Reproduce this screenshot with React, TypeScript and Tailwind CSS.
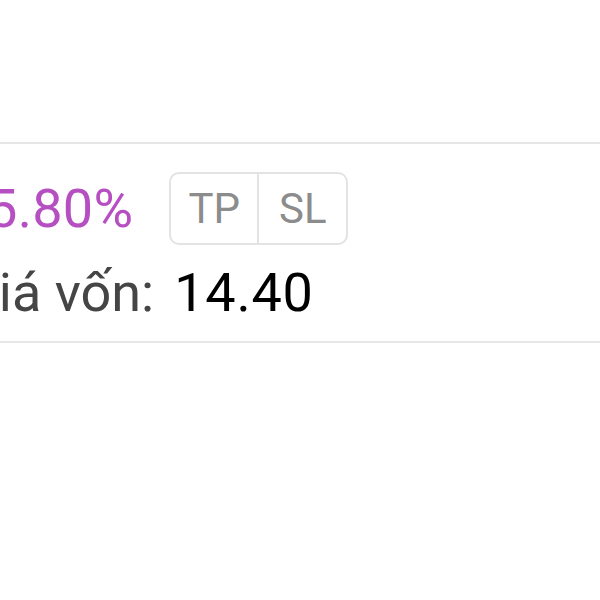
import React from "react";

export default function App() {
  return (
    <div
      className="w-[600px] h-[600px] bg-white overflow-hidden pt-[142px]"
      style={{ fontFamily: "Roboto, 'Noto Sans', sans-serif" }}
    >
      <div className="border-y-2 border-[#e6e6e6] h-[201px] flex flex-col pt-[28px]">
        <div className="flex items-center h-[73px]">
          <span className="ml-[-13px] text-[54px] leading-none tracking-[0.3px] text-[#b64fc1] whitespace-nowrap">
            5.80%
          </span>
          <div className="ml-[36px] flex h-[73px] w-[179px] rounded-[10px] border-2 border-[#e3e3e3]">
            <div className="w-[88px] flex items-center justify-center border-r-2 border-[#e3e3e3] text-[42px] leading-none text-[#8c8c8c]">
              TP
            </div>
            <div className="flex-1 flex items-center justify-center text-[42px] leading-none text-[#8c8c8c]">
              SL
            </div>
          </div>
        </div>
        <div className="mt-[21px] flex items-center whitespace-nowrap text-[54px] leading-none">
          <span className="ml-[-38px] text-[#454545]">Giá vốn:</span>
          <span className="ml-[20px] tracking-[0.8px] text-black">14.40</span>
        </div>
      </div>
    </div>
  );
}
